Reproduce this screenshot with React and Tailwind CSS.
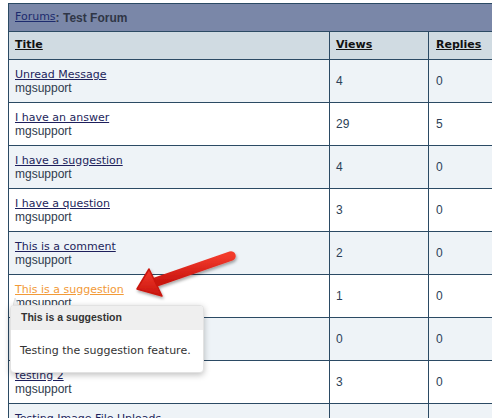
import React from 'react';

const VERDANA = "font-['DejaVu_Sans',Verdana,sans-serif]";
const ARIAL = "font-['Liberation_Sans',Arial,sans-serif]";

const TOPICS = [
  { title: 'Unread Message', author: 'mgsupport', views: 4, replies: 0 },
  { title: 'I have an answer', author: 'mgsupport', views: 29, replies: 5 },
  { title: 'I have a suggestion', author: 'mgsupport', views: 4, replies: 0 },
  { title: 'I have a question', author: 'mgsupport', views: 3, replies: 0 },
  { title: 'This is a comment', author: 'mgsupport', views: 2, replies: 0 },
  { title: 'This is a suggestion', author: 'mgsupport', views: 1, replies: 0, hover: true },
  { title: 'testing', author: 'mgsupport', views: 0, replies: 0 },
  { title: 'testing 2', author: 'mgsupport', views: 3, replies: 0 },
  { title: 'Testing Image File Uploads', author: 'mgsupport', views: 5, replies: 1 },
];

// red arrow pointing at the hovered link
const Arrow = () => (
  <svg className="absolute left-0 top-0 pointer-events-none" width="492" height="418" viewBox="0 0 492 418">
    <defs>
      <filter id="shadow" x="-20%" y="-50%" width="140%" height="200%">
        <feDropShadow dx="1" dy="2" stdDeviation="1.5" floodColor="#000" floodOpacity="0.35" />
      </filter>
      <linearGradient id="red" x1="0" y1="0" x2="0" y2="1">
        <stop offset="0" stopColor="#f23a2c" />
        <stop offset="1" stopColor="#c9150f" />
      </linearGradient>
    </defs>
    <g filter="url(#shadow)">
      <line x1="231" y1="256" x2="156" y2="282" stroke="url(#red)" strokeWidth="9.5" strokeLinecap="round" />
      <polygon points="137,289 149,269 162,296" fill="url(#red)" stroke="#c9150f" strokeWidth="1.5" strokeLinejoin="round" />
    </g>
  </svg>
);

const Tooltip = () => (
  <>
    <svg className="absolute left-[13px] top-[298px]" width="8" height="8" viewBox="0 0 8 8">
      <polygon points="0,8 2,0 6,8" fill="#f2f2f2" stroke="#dcdcdc" strokeWidth="0.8" />
    </svg>
    <div className="absolute left-[10px] top-[305px] w-[194px] h-[68px] rounded-[4px] bg-white border border-[#e2e2e2] shadow-[0_2px_6px_rgba(0,0,0,0.25)] overflow-hidden">
      <div className={`h-[24px] bg-[#efefef] pl-[10px] flex items-center text-[10.5px] font-bold text-[#333] ${ARIAL}`}>
        This is a suggestion
      </div>
      <div className={`h-[43px] pl-[9px] flex items-center text-[11px] text-[#333] ${VERDANA}`}>
        Testing the suggestion feature.
      </div>
    </div>
  </>
);

const App = () => {
  return (
    <div className="relative w-[492px] h-[418px] overflow-hidden bg-white">
      <div className="ml-[8px] mt-[3px] w-[520px] border-l border-t border-r border-[#2b4a64]">
        <div className="h-[28px] bg-[#7a87a8] border-b border-[#2b4a64] flex items-center px-[6px]">
          <a href="#" className={`text-[11px] text-[#1d2b6e] underline ${VERDANA}`}>Forums</a>
          <span className={`text-[12px] font-bold text-[#2f3646] ${ARIAL}`}>: Test Forum</span>
        </div>

        <div className={`h-[28px] bg-[#d0dbe2] border-b border-[#2b4a64] flex text-[11px] font-bold text-[#111] ${VERDANA}`}>
          <div className="w-[321px] border-r border-[#2b4a64] px-[6px] flex items-center">
            <span className="underline">Title</span>
          </div>
          <div className="w-[99px] border-r border-[#2b4a64] px-[6px] flex items-center">
            <span className="underline">Views</span>
          </div>
          <div className="flex-1 px-[7px] flex items-center">
            <span className="underline">Replies</span>
          </div>
        </div>

        {TOPICS.map((topic, index) => (
          <div
            key={index}
            className={`h-[43px] border-b border-[#2b4a64] flex ${index % 2 === 0 ? 'bg-[#eef3f7]' : 'bg-white'}`}
          >
            <div className="w-[321px] border-r border-[#2b4a64] px-[6px] pt-[1px] flex flex-col justify-center">
              <a
                href="#"
                className={`text-[11px] leading-[13px] underline ${VERDANA} ${topic.hover ? 'text-[#f29a38]' : 'text-[#1d1f5c]'}`}
              >
                {topic.title}
              </a>
              <span className={`text-[12px] leading-[14px] text-[#2f3a4c] ${ARIAL}`}>{topic.author}</span>
            </div>
            <div className={`w-[99px] border-r border-[#2b4a64] px-[6px] flex items-center text-[12px] text-[#2c3f57] ${ARIAL}`}>
              {topic.views}
            </div>
            <div className={`flex-1 px-[7px] flex items-center text-[12px] text-[#2c3f57] ${ARIAL}`}>
              {topic.replies}
            </div>
          </div>
        ))}
      </div>

      <Arrow />
      <Tooltip />
    </div>
  );
};

export default App;
